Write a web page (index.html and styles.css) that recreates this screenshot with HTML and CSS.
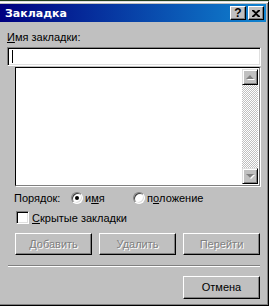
FILE: index.html
```html
<!DOCTYPE html>
<html>
<head>
    <title>Закладка</title>
    <link rel="stylesheet" href="styles.css">
</head>
<body>
    <div class="window">
        <div class="titlebar">
            <span class="title">Закладка</span>
            <div class="caption-buttons">
                <div class="cap-btn help">?</div>
                <div class="cap-btn close">
                    <svg width="8" height="7" viewBox="0 0 8 7">
                        <path d="M0 0h2l2 2 2-2h2v1L5 3.5 8 6v1H6L4 5 2 7H0V6l3-2.5L0 1z" fill="#000"/>
                    </svg>
                </div>
            </div>
        </div>

        <div class="client">
            <div class="field-label"><u>И</u>мя закладки:</div>
            <div class="textbox"><span class="caret"></span></div>

            <div class="listbox">
                <div class="list-items"></div>
                <div class="scrollbar">
                    <div class="scroll-btn"><span class="arrow up"></span></div>
                    <div class="scroll-track"></div>
                    <div class="scroll-btn"><span class="arrow down"></span></div>
                </div>
            </div>

            <div class="order-row">
                <span class="order-label">Порядок:</span>
                <label class="option option-name">
                    <span class="radio checked"></span>и<u>м</u>я
                </label>
                <label class="option">
                    <span class="radio"></span>п<u>о</u>ложение
                </label>
            </div>

            <label class="check-row">
                <span class="checkbox"></span><u>С</u>крытые закладки
            </label>

            <div class="button-row">
                <div class="btn disabled">Добавить</div>
                <div class="btn disabled">Удалить</div>
                <div class="btn disabled">Перейти</div>
            </div>

            <div class="separator"></div>

            <div class="footer">
                <div class="btn">Отмена</div>
            </div>
        </div>
    </div>
</body>
</html>
```

FILE: styles.css
```css
body {
    margin: 0;
    width: 269px;
    height: 306px;
    overflow: hidden;
    background-color: #24401f; /* desktop showing above the window */
    font-family: "Liberation Sans", Arial, sans-serif;
    font-size: 11px;
    color: #000;
}

u {
    text-decoration: underline;
    text-underline-offset: 1px;
}

/* Classic raised window frame */
.window {
    margin-top: 1px;
    margin-left: -3px;
    width: 272px;
    height: 305px;
    box-sizing: border-box;
    background-color: #c0c0c0;
    border: 1px solid;
    border-color: #dfdfdf #000 #000 #dfdfdf;
    box-shadow: inset 1px 1px #fff, inset -1px -1px #808080;
    padding: 2px;
    display: flex;
    flex-direction: column;
}

.titlebar {
    height: 18px;
    background: linear-gradient(to right, #000080, #1084d0);
    display: flex;
    align-items: center;
    justify-content: space-between;
    padding-left: 5px;
    padding-right: 2px;
}

.title {
    color: #fff;
    font-family: "DejaVu Sans", sans-serif;
    font-weight: bold;
    font-size: 11px;
}

.caption-buttons {
    display: flex;
    gap: 2px;
}

.cap-btn {
    width: 16px;
    height: 14px;
    box-sizing: border-box;
    background-color: #c0c0c0;
    border: 1px solid;
    border-color: #fff #000 #000 #fff;
    box-shadow: inset -1px -1px #808080;
    display: flex;
    align-items: center;
    justify-content: center;
}

.help {
    font-weight: bold;
    font-size: 12px;
    line-height: 12px;
    padding-bottom: 1px;
}

/* Dialog body */
.client {
    flex: 1;
    padding: 9px 5px 0 7px;
}

.field-label {
    height: 13px;
    line-height: 13px;
    margin-bottom: 3px;
}

.textbox {
    width: 254px;
    height: 19px;
    box-sizing: border-box;
    background-color: #fff;
    border: 1px solid;
    border-color: #808080 #fff #fff #808080;
    box-shadow: inset 1px 1px #000, inset -1px -1px #dfdfdf;
    padding: 2px 0 0 4px;
}

.caret {
    display: block;
    width: 1px;
    height: 13px;
    background-color: #000;
}

.listbox {
    margin: 1px 0 0 8px;
    width: 245px;
    height: 119px;
    box-sizing: border-box;
    border: 1px solid;
    border-color: #000 #808080 #808080 #000;
    box-shadow: 1px 1px #fff;
    display: flex;
    background-color: #fff;
    padding: 1px 1px 1px 1px;
}

.list-items {
    flex: 1;
}

.scrollbar {
    width: 16px;
    display: flex;
    flex-direction: column;
}

.scroll-track {
    flex: 1;
    background: repeating-conic-gradient(#fff 0 25%, #c0c0c0 0 50%) 0 0 / 2px 2px;
}

.scroll-btn {
    height: 16px;
    box-sizing: border-box;
    background-color: #c0c0c0;
    border: 1px solid;
    border-color: #dfdfdf #000 #000 #dfdfdf;
    box-shadow: inset 1px 1px #fff, inset -1px -1px #808080;
    display: flex;
    align-items: center;
    justify-content: center;
}

/* disabled arrows: grey with a white shadow */
.arrow {
    width: 0;
    height: 0;
    border-left: 4px solid transparent;
    border-right: 4px solid transparent;
}

.arrow.up {
    border-bottom: 4px solid #808080;
    filter: drop-shadow(1px 1px 0 #fff);
}

.arrow.down {
    border-top: 4px solid #808080;
    filter: drop-shadow(1px 1px 0 #fff);
}

.order-row {
    margin-top: 5px;
    padding-left: 7px;
    height: 13px;
    display: flex;
    align-items: center;
}

.order-label {
    width: 57px;
}

.option {
    display: flex;
    align-items: center;
}

.option-name {
    width: 62px;
}

.radio {
    width: 12px;
    height: 12px;
    box-sizing: border-box;
    border-radius: 50%;
    background-color: #fff;
    border: 1px solid;
    border-color: #808080 #fff #fff #808080;
    box-shadow: inset 1px 1px #404040, inset -1px -1px #dfdfdf;
    margin-right: 2px;
    display: flex;
    align-items: center;
    justify-content: center;
}

.radio.checked::after {
    content: "";
    width: 4px;
    height: 4px;
    border-radius: 50%;
    background-color: #000;
}

.check-row {
    margin-top: 7px;
    padding-left: 9px;
    display: flex;
    align-items: center;
    height: 13px;
}

.checkbox {
    width: 13px;
    height: 13px;
    box-sizing: border-box;
    background-color: #fff;
    border: 1px solid;
    border-color: #808080 #fff #fff #808080;
    box-shadow: inset 1px 1px #000, inset -1px -1px #dfdfdf;
    margin-right: 3px;
}

.button-row {
    margin-top: 9px;
    padding-left: 8px;
    display: flex;
    gap: 7px;
}

.btn {
    width: 77px;
    height: 22px;
    box-sizing: border-box;
    background-color: #c0c0c0;
    border: 1px solid;
    border-color: #fff #000 #000 #fff;
    box-shadow: inset -1px -1px #808080;
    display: flex;
    align-items: center;
    justify-content: center;
    padding-bottom: 1px;
}

.btn.disabled {
    color: #808080;
    text-shadow: 1px 1px 0 #fff;
}

.separator {
    margin: 10px 0 0 1px;
    width: 252px;
    height: 1px;
    background-color: #808080;
    box-shadow: 0 1px #fff;
}

.footer {
    margin-top: 10px;
    display: flex;
    justify-content: flex-end;
    padding-right: 1px;
}

.footer .btn {
    height: 23px;
}
```
